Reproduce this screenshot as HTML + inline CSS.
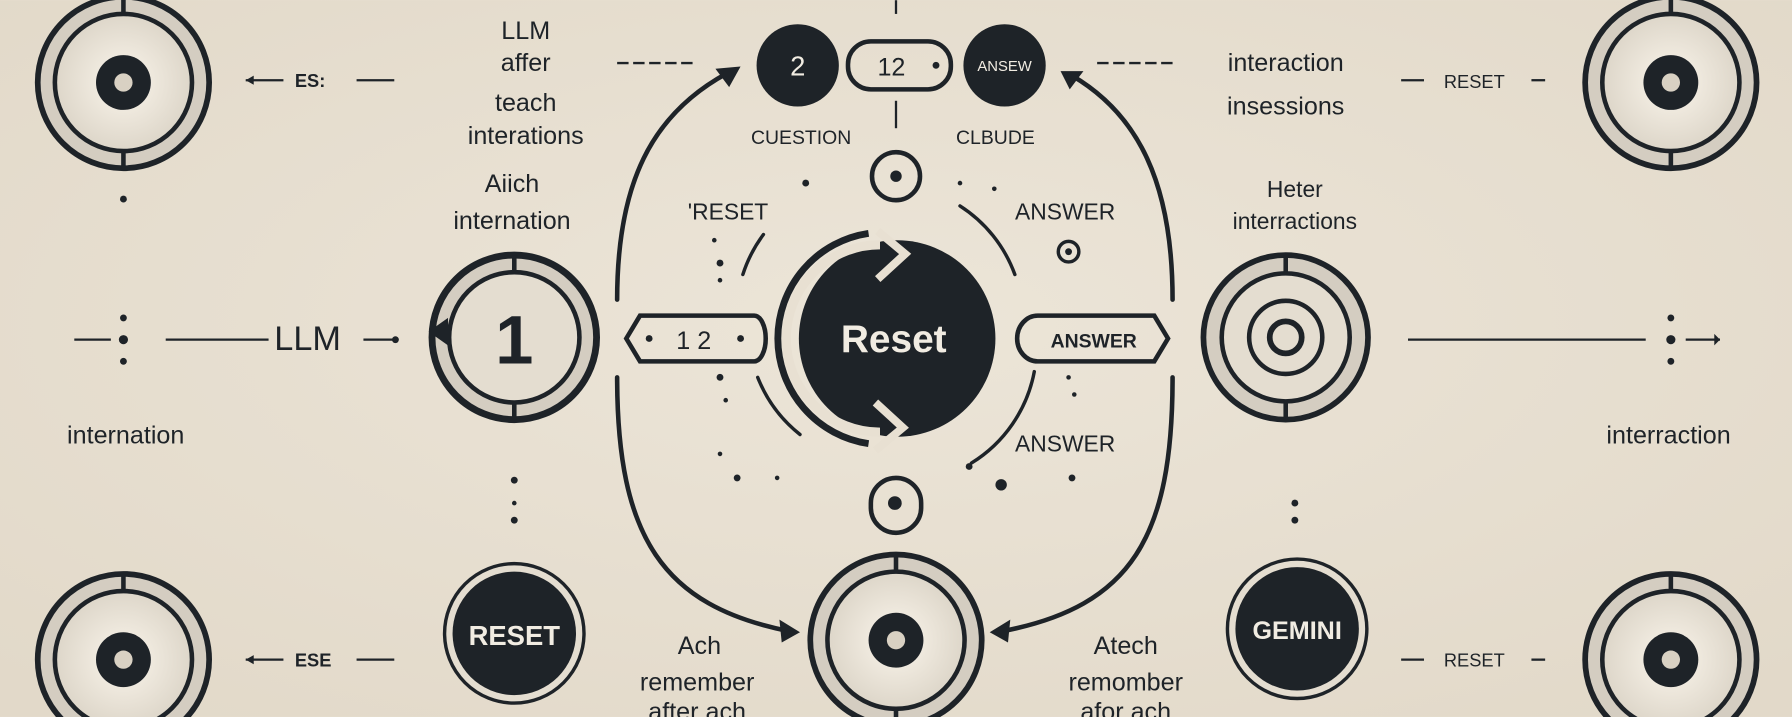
<!DOCTYPE html>
<html><head><meta charset="utf-8"><style>
html,body{margin:0;padding:0;background:#e8e0d2;overflow:hidden}
svg{display:block}
text{font-family:"Liberation Sans","DejaVu Sans",sans-serif;fill:#1e2328}
</style></head><body>
<svg width="1792" height="717" viewBox="0 0 1568 627" xmlns="http://www.w3.org/2000/svg">
<defs>
<radialGradient id="bg" cx="50%" cy="45%" r="70%"><stop offset="0" stop-color="#ece5d8"/><stop offset="1" stop-color="#e2d9c9"/></radialGradient>
<radialGradient id="inr" cx="50%" cy="50%" r="50%"><stop offset="0.4" stop-color="#efe9de"/><stop offset="1" stop-color="#ddd6c9"/></radialGradient>
<g id="tgt">
<circle r="75" fill="#d4cdc1" stroke="#1e2328" stroke-width="5"/>
<circle r="60" fill="url(#inr)" stroke="#1e2328" stroke-width="4"/>
<line x1="0" y1="-75" x2="0" y2="-60" stroke="#1e2328" stroke-width="4"/>
<line x1="0" y1="60" x2="0" y2="75" stroke="#1e2328" stroke-width="4"/>
<circle r="24" fill="#1e2328"/>
<circle r="8" fill="#d9d1c3"/>
</g>
</defs>
<rect width="1568" height="627" fill="url(#bg)"/>
<g stroke="#1e2328" fill="none" stroke-width="4" stroke-linecap="round">
<path d="M540 262 C540 160 570 100 636 64"/>
<path d="M540 330 C540 470 580 530 690 552"/>
<path d="M1026 262 C1026 160 996 100 938 66"/>
<path d="M1026 330 C1026 470 990 530 878 552"/>
<path d="M668 205 A120 120 0 0 0 650 240" stroke-width="3"/>
<path d="M663 330 A120 120 0 0 0 700 380" stroke-width="3"/>
<path d="M840 180 A120 120 0 0 1 888 240" stroke-width="3"/>
<path d="M905 325 A120 120 0 0 1 850 405" stroke-width="3"/>
</g>
<g fill="#1e2328">
<polygon points="648,58 626,60 638,76"/>
<polygon points="700,553 682,542 684,562"/>
<polygon points="928,62 948,62 936,78"/>
<polygon points="866,553 884,542 882,562"/>
</g>
<use href="#tgt" x="108" y="72"/>
<use href="#tgt" x="1462" y="72"/>
<use href="#tgt" x="108" y="577"/>
<use href="#tgt" x="1462" y="577"/>
<use href="#tgt" x="784" y="560"/>
<!-- circle 1 -->
<circle cx="450" cy="295" r="72" fill="#d4cdc1" stroke="#1e2328" stroke-width="6"/>
<circle cx="450" cy="295" r="57" fill="#e4ddd0" stroke="#1e2328" stroke-width="4"/>
<line x1="450" y1="223" x2="450" y2="238" stroke="#1e2328" stroke-width="4"/>
<line x1="450" y1="352" x2="450" y2="367" stroke="#1e2328" stroke-width="4"/>
<polygon points="375,290 392,278 392,302" fill="#1e2328"/>
<text x="450" y="318" font-size="60" font-weight="bold" text-anchor="middle">1</text>
<!-- right target -->
<circle cx="1125" cy="295" r="72" fill="#d4cdc1" stroke="#1e2328" stroke-width="5"/>
<circle cx="1125" cy="295" r="56" fill="#e4ddd0" stroke="#1e2328" stroke-width="4"/>
<circle cx="1125" cy="295" r="32" fill="none" stroke="#1e2328" stroke-width="4"/>
<circle cx="1125" cy="295" r="14" fill="none" stroke="#1e2328" stroke-width="5"/>
<line x1="1125" y1="223" x2="1125" y2="239" stroke="#1e2328" stroke-width="4"/>
<line x1="1125" y1="351" x2="1125" y2="367" stroke="#1e2328" stroke-width="4"/>
<!-- reset main -->
<path d="M760 204 A93 93 0 0 0 760 388" fill="none" stroke="#1e2328" stroke-width="6"/>
<circle cx="785" cy="296" r="86" fill="#1e2328"/>
<path d="M770 214 A82 82 0 0 0 770 378" fill="none" stroke="#e8e0d2" stroke-width="8"/>
<polyline points="768,202 792,222 768,244" stroke="#e8e0d2" stroke-width="7" fill="none"/>
<polyline points="766,352 790,374 766,394" stroke="#e8e0d2" stroke-width="7" fill="none"/>
<text x="782" y="308" font-size="34" font-weight="bold" text-anchor="middle" style="fill:#f1ece2">Reset</text>
<!-- reset button -->
<circle cx="450" cy="554" r="61" fill="#e4ddd0" stroke="#1e2328" stroke-width="3"/>
<circle cx="450" cy="554" r="54" fill="#1e2328"/>
<text x="450" y="564" font-size="24" font-weight="bold" text-anchor="middle" style="fill:#f1ece2">RESET</text>
<circle cx="1135" cy="550" r="61" fill="#e4ddd0" stroke="#1e2328" stroke-width="3"/>
<circle cx="1135" cy="550" r="54" fill="#1e2328"/>
<text x="1135" y="559" font-size="22" font-weight="bold" text-anchor="middle" style="fill:#f1ece2">GEMINI</text>
<!-- top row -->
<circle cx="698" cy="57" r="36" fill="#1e2328"/>
<text x="698" y="66" font-size="24" text-anchor="middle" style="fill:#f1ece2">2</text>
<rect x="742" y="36" width="90" height="42" rx="20" fill="none" stroke="#1e2328" stroke-width="4"/>
<text x="780" y="66" font-size="22" text-anchor="middle">12</text>
<circle cx="819" cy="57" r="3" fill="#1e2328"/>
<circle cx="879" cy="57" r="36" fill="#1e2328"/>
<text x="879" y="62" font-size="13" text-anchor="middle" style="fill:#f1ece2">ANSEW</text>
<line x1="784" y1="0" x2="784" y2="12" stroke="#1e2328" stroke-width="2"/>
<line x1="784" y1="88" x2="784" y2="112" stroke="#1e2328" stroke-width="2"/>
<circle cx="784" cy="154" r="21" fill="none" stroke="#1e2328" stroke-width="4"/>
<circle cx="784" cy="154" r="5" fill="#1e2328"/>
<rect x="762" y="418" width="44" height="48" rx="22" fill="none" stroke="#1e2328" stroke-width="4"/>
<circle cx="783" cy="440" r="6" fill="#1e2328"/>
<!-- pills -->
<path d="M548 296 L560 276 H660 A10 20 0 0 1 660 316 H560 Z" fill="none" stroke="#1e2328" stroke-width="4"/>
<text x="607" y="305" font-size="22" text-anchor="middle">1  2</text>
<circle cx="568" cy="296" r="3" fill="#1e2328"/><circle cx="648" cy="296" r="3" fill="#1e2328"/>
<path d="M1022 296 L1010 276 H908 A18 20 0 0 0 908 316 H1010 Z" fill="none" stroke="#1e2328" stroke-width="4"/>
<text x="957" y="304" font-size="17" font-weight="bold" text-anchor="middle">ANSWER</text>
<!-- labels -->
<g font-size="22" text-anchor="middle">
<text x="460" y="34">LLM</text>
<text x="460" y="62">affer</text>
<text x="460" y="97">teach</text>
<text x="460" y="126">interations</text>
<text x="448" y="168">Aiich</text>
<text x="448" y="200">internation</text>
<text x="110" y="388">internation</text>
<text x="1125" y="62">interaction</text>
<text x="1125" y="100">insessions</text>
<text x="1133" y="172" font-size="20">Heter</text>
<text x="1133" y="200" font-size="20">interractions</text>
<text x="1460" y="388">interraction</text>
<text x="612" y="572">Ach</text>
<text x="610" y="604">remember</text>
<text x="610" y="630">after ach</text>
<text x="985" y="572">Atech</text>
<text x="985" y="604">remomber</text>
<text x="985" y="630">afor ach</text>
</g>
<g font-size="17" text-anchor="middle">
<text x="701" y="126">CUESTION</text>
<text x="871" y="126">CLBUDE</text>
<text x="637" y="192" font-size="20">'RESET</text>
<text x="932" y="192" font-size="20">ANSWER</text>
<text x="932" y="395" font-size="20">ANSWER</text>
<text x="1290" y="77" font-size="16">RESET</text>
<text x="1290" y="583" font-size="16">RESET</text>
</g>
<text x="258" y="76" font-size="16" font-weight="bold">ES:</text>
<text x="258" y="583" font-size="16" font-weight="bold">ESE</text>
<text x="240" y="306" font-size="30">LLM</text>
<g stroke="#1e2328" stroke-width="2" fill="none">
<line x1="215" y1="70" x2="248" y2="70"/><line x1="312" y1="70" x2="345" y2="70"/>
<line x1="215" y1="577" x2="248" y2="577"/><line x1="312" y1="577" x2="345" y2="577"/>
<line x1="540" y1="55" x2="608" y2="55" stroke-dasharray="10 4"/>
<line x1="960" y1="55" x2="1030" y2="55" stroke-dasharray="10 4"/>
<line x1="145" y1="297" x2="235" y2="297"/><line x1="318" y1="297" x2="346" y2="297"/>
<line x1="65" y1="297" x2="97" y2="297"/>
<line x1="1232" y1="297" x2="1440" y2="297"/><line x1="1475" y1="297" x2="1505" y2="297"/>
<line x1="1226" y1="70" x2="1246" y2="70"/><line x1="1340" y1="70" x2="1352" y2="70"/>
<line x1="1226" y1="577" x2="1246" y2="577"/><line x1="1340" y1="577" x2="1352" y2="577"/>
</g>
<g fill="#1e2328">
<circle cx="108" cy="174" r="3"/><circle cx="108" cy="278" r="3"/><circle cx="108" cy="297" r="4"/><circle cx="108" cy="316" r="3"/>
<circle cx="1462" cy="278" r="3"/><circle cx="1462" cy="297" r="4"/><circle cx="1462" cy="316" r="3"/>
<circle cx="450" cy="420" r="3"/><circle cx="450" cy="440" r="2"/><circle cx="450" cy="455" r="3"/>
<circle cx="1133" cy="440" r="3"/><circle cx="1133" cy="455" r="3"/>
<circle cx="705" cy="160" r="3"/><circle cx="625" cy="210" r="2"/><circle cx="630" cy="230" r="3"/><circle cx="630" cy="245" r="2"/>
<circle cx="630" cy="330" r="3"/><circle cx="635" cy="350" r="2"/><circle cx="630" cy="397" r="2"/><circle cx="645" cy="418" r="3"/><circle cx="680" cy="418" r="2"/>
<circle cx="840" cy="160" r="2"/><circle cx="870" cy="165" r="2"/><circle cx="935" cy="330" r="2"/><circle cx="940" cy="345" r="2"/>
<circle cx="848" cy="408" r="3"/><circle cx="938" cy="418" r="3"/>
<circle cx="935" cy="220" r="9" fill="none" stroke="#1e2328" stroke-width="3"/><circle cx="935" cy="220" r="3"/>
<circle cx="876" cy="424" r="5"/>
<polygon points="1505,297 1500,292 1500,302"/>
<polygon points="215,70 222,66 222,74"/><polygon points="215,577 222,573 222,581"/>
<circle cx="346" cy="297" r="3"/>
</g>
</svg>
</body></html>
